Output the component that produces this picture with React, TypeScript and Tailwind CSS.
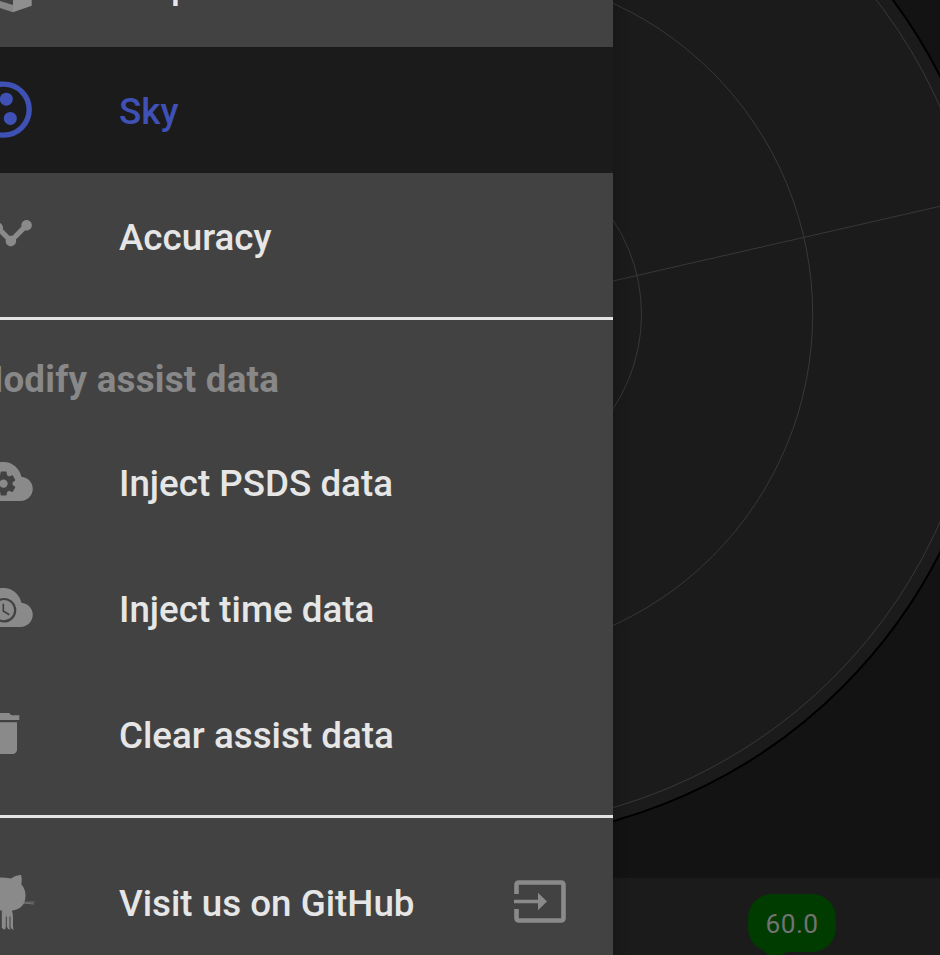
import type { ReactNode } from "react";

const GREY = "#8a8a8a";

function Icon({ children }: { children: ReactNode }) {
  return (
    <svg className="-ml-7 h-[63px] w-[63px] shrink-0 overflow-visible" viewBox="-28 0 63 63" fill={GREY}>
      {children}
    </svg>
  );
}

type RowProps = { icon: ReactNode; label: string; active?: boolean; low?: boolean; end?: ReactNode };

function Row({ icon, label, active = false, low = false, end }: RowProps) {
  return (
    <div className={`flex h-[126px] shrink-0 items-center ${active ? "bg-[#1b1b1b] text-[#3f51b5]" : "text-[#e6e6e6]"}`}>
      <Icon>{icon}</Icon>
      <span className={`ml-[84px] whitespace-nowrap font-medium ${low ? "pt-0.5" : "pb-0.5"}`}>{label}</span>
      {end}
    </div>
  );
}

const CLOUD = "M19.35 10.04C18.67 6.59 15.64 4 12 4 9.11 4 6.6 5.64 5.35 8.04 2.34 8.36 0 10.91 0 14c0 3.31 2.69 6 6 6h13c2.76 0 5-2.24 5-5 0-2.64-2.05-4.78-4.65-4.96z";
const GEAR = "M19.43 12.98c.04-.32.07-.64.07-.98s-.03-.66-.07-.98l2.11-1.65c.19-.15.24-.42.12-.64l-2-3.46c-.12-.22-.39-.3-.61-.22l-2.49 1c-.52-.4-1.08-.73-1.69-.98l-.38-2.65C14.46 2.18 14.25 2 14 2h-4c-.25 0-.46.18-.49.42l-.38 2.65c-.61.25-1.17.59-1.69.98l-2.49-1c-.23-.09-.49 0-.61.22l-2 3.46c-.13.22-.07.49.12.64l2.11 1.65c-.04.32-.07.65-.07.98s.03.66.07.98l-2.11 1.65c-.19.15-.24.42-.12.64l2 3.46c.12.22.39.3.61.22l2.49-1c.52.4 1.08.73 1.69.98l.38 2.65c.03.24.24.42.49.42h4c.25 0 .46-.18.49-.42l.38-2.65c.61-.25 1.17-.59 1.69-.98l2.49 1c.23.09.49 0 .61-.22l2-3.46c.12-.22.07-.49-.12-.64l-2.11-1.65z";

const mapIcon = (
  <g>
    <path fill="#868686" d="M-28 39.500 13 52v7.300L-28 45.500z" />
    <path fill="#8f8f8f" d="M13 10 31.700 5v47.700L13 59.300z" />
  </g>
);

const skyIcon = (
  <g fill="#3f51b5">
    <circle cx="3.7" cy="30.600" r="25.500" fill="none" stroke="#3f51b5" strokeWidth="5.400" />
    <circle cx="6.300" cy="20.200" r="6.500" />
    <circle cx="10.300" cy="39.400" r="6.500" />
    <circle cx="-9" cy="35" r="6.500" />
  </g>
);

const accuracyIcon = (
  <path transform="translate(-28.5 -.8) scale(2.625)" d="M23 8c0 1.1-.9 2-2 2-.18 0-.35-.02-.51-.07l-3.56 3.55c.05.16.07.34.07.52 0 1.1-.9 2-2 2s-2-.9-2-2c0-.18.02-.36.07-.52l-2.55-2.55c-.16.05-.34.07-.52.07s-.36-.02-.52-.07l-4.55 4.56c.05.16.07.33.07.51 0 1.1-.9 2-2 2s-2-.9-2-2 .9-2 2-2c.18 0 .35.02.51.07l4.56-4.55C8.02 9.36 8 9.18 8 9c0-1.1.9-2 2-2s2 .9 2 2c0 .18-.02.36-.07.52l2.55 2.55c.16-.05.34-.07.52-.07s.36.02.52.07l3.55-3.56C19.02 8.35 19 8.18 19 8c0-1.1.9-2 2-2s2 .9 2 2z" />
);

const gearIcon = (
  <g>
    <path transform="translate(-25.8 -.8) scale(2.44)" d={CLOUD} />
    <path fill="#424242" transform="translate(-10.8 16.2) scale(1.2)" d={GEAR} />
    <circle cx="3.500" cy="30.600" r="4.200" />
  </g>
);

const clockIcon = (
  <g>
    <path transform="translate(-25.8 -.8) scale(2.44)" d={CLOUD} />
    <circle cx="4" cy="31.200" r="11.200" fill="none" stroke="#424242" strokeWidth="2.200" />
    <path d="M3.300 24.800v7.300l6 3.600" fill="none" stroke="#424242" strokeWidth="1.700" />
  </g>
);

const trashIcon = (
  <path transform="translate(-24 1.2) scale(2.28)" d="M6 19c0 1.100.9 2 2 2h8c1.100 0 2-.9 2-2V7H6v12zM19 4h-3.500l-1-1h-5l-1 1H5v2h14V4z" />
);

const githubIcon = (
  <g transform="translate(0 -7.5)">
    <path d="M-19 19c-1-4 0-8 1-10 4 0 8 3 9 4q10-2 20 0 4-3 10-3.700 1.300 5 .3 9.500c3 3.500 4.300 7 4.200 11.500-.2 9-4.500 13.500-13.700 15q1.200 2 1.200 6v10q0 2 1 3-3-.3-3.500-3V51h-1v10q0 2 1 3.200-3-.5-3.700-3V51h-1v10q0 2-1 3-2 0-3-2V45q-15-2-20-10z" />
    <path d="M23 36.800 34.500 36.500M23 37.500l11 1" stroke={GREY} strokeWidth=".7" fill="none" />
  </g>
);

function Divider() {
  return <div className="h-[3px] shrink-0 bg-[#e3e3e3]" />;
}

function Drawer() {
  return (
    <nav className="flex h-[955px] w-[613px] shrink-0 flex-col overflow-hidden bg-[#424242] text-[36.75px] leading-[43px]">
      <div className="-mt-[79px] shrink-0">
        <Row icon={mapIcon} label="Map" low />
      </div>
      <Row icon={skyIcon} label="Sky" active low />
      <Row icon={accuracyIcon} label="Accuracy" low />
      <div className="h-[18px] shrink-0" />
      <Divider />
      <div className="flex h-[101px] shrink-0 items-center pt-[17px]">
        <span className="-ml-[29px] whitespace-nowrap font-bold tracking-[0.220px] text-[#888]">Modify assist data</span>
      </div>
      <Row icon={gearIcon} label="Inject PSDS data" />
      <Row icon={clockIcon} label="Inject time data" />
      <Row icon={trashIcon} label="Clear assist data" />
      <div className="h-4 shrink-0" />
      <Divider />
      <div className="h-[23px] shrink-0" />
      <Row
        icon={githubIcon}
        label="Visit us on GitHub"
        end={
          <svg className="mr-[47px] mb-[5px] ml-auto h-[43px] w-[52px] shrink-0" viewBox="0 0 52 43">
            <path d="M2.500 14V5q0-2.500 2.500-2.500h42q2.500 0 2.500 2.500v33q0 2.500-2.500 2.500H5q-2.500 0-2.500-2.500v-9" fill="none" stroke={GREY} strokeWidth="4.600" />
            <path d="M0 19.700h24v-7l9 8.800-9 8.800v-7H0z" fill={GREY} />
          </svg>
        }
      />
    </nav>
  );
}

function SkyView() {
  return (
    <svg className="block h-[878px] w-[327px] shrink-0" viewBox="613 0 327 878">
      <circle cx="470.500" cy="314.400" r="526.500" fill="#1b1b1b" stroke="#000" strokeWidth="2" />
      <g fill="none" stroke="#383838" strokeWidth="1">
        <circle cx="470.500" cy="314.400" r="171" />
        <circle cx="470.500" cy="314.400" r="342.200" />
        <circle cx="470.500" cy="314.400" r="513.400" />
        <path d="M470.500 313.500 940 206.300" />
      </g>
    </svg>
  );
}

export default function App() {
  return (
    <div className="flex h-[955px] w-[940px] overflow-hidden font-[Roboto,sans-serif]">
      <Drawer />
      <main className="relative flex h-[955px] w-[327px] flex-col overflow-hidden bg-[#131313]">
        <SkyView />
        <div className="flex h-[77px] shrink-0 bg-[#1b1b1b] pt-4 pl-[135px]">
          <div className="relative flex h-[58px] w-[88px] items-center justify-center rounded-[24px] bg-[#003c00] pt-1 text-[26.250px] tracking-[0.500px] text-[#727272]">
            60.0
            <svg className="absolute top-[52px] left-[13px] h-[9px] w-[28px]" viewBox="0 0 28 9">
              <path d="M0 0Q3 6 7 9H21Q23 8 26 5V0z" fill="#003c00" />
            </svg>
          </div>
        </div>
        <div className="pointer-events-none absolute inset-y-0 left-0 w-5 bg-linear-to-r from-black/12 to-transparent" />
      </main>
    </div>
  );
}
